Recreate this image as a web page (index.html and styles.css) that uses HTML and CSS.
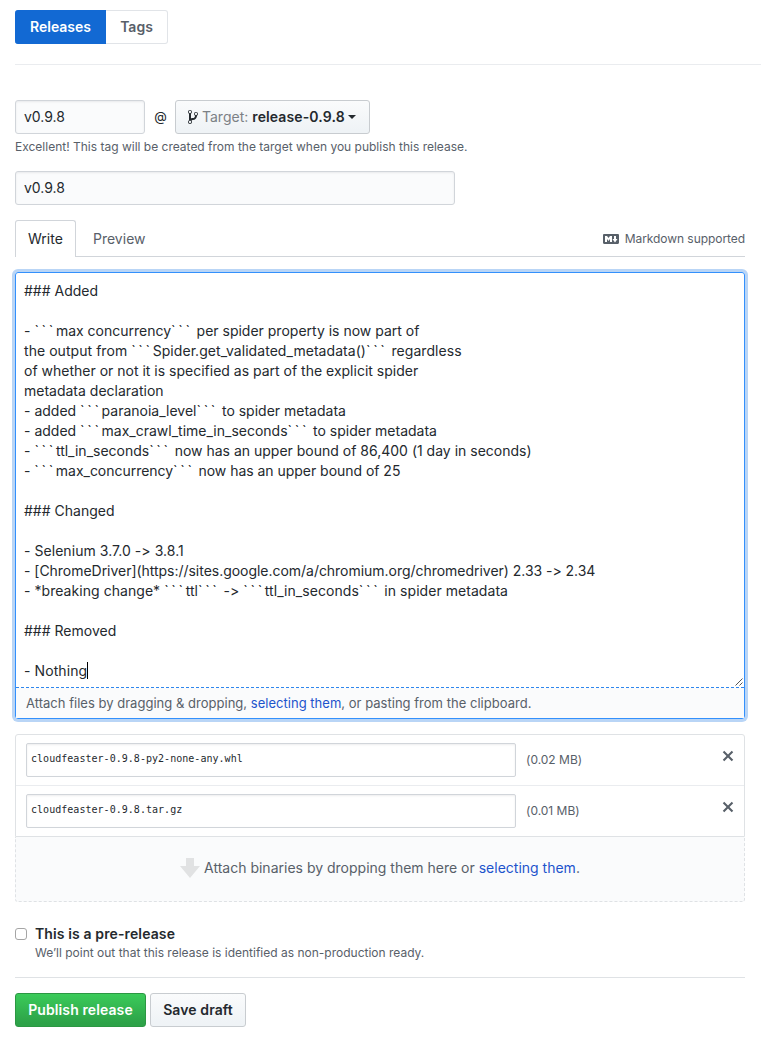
FILE: index.html
```
<!DOCTYPE html>
<html lang="en">
<head>
<meta charset="utf-8">
<title>New release</title>
<link rel="stylesheet" href="styles.css">
</head>
<body>
<nav class="subnav"><a class="seg selected"><span class="t-releases">Releases</span></a><a class="seg"><span class="t-tags">Tags</span></a></nav>
<main class="form">
  <div class="tag-row">
    <div class="field tag-field"><span>v0.9.8</span></div>
    <span class="at">@</span>
    <div class="btn target">
      <svg class="branch" width="10" height="16" viewBox="0 0 10 16"><path d="M10 5c0-1.11-.89-2-2-2a1.993 1.993 0 0 0-1 3.72v.3c-.02.52-.23.98-.63 1.38-.4.4-.86.61-1.38.63-.83.02-1.48.16-2 .45V4.72a1.993 1.993 0 0 0-1-3.72C.88 1 0 1.89 0 3a2 2 0 0 0 1 1.72v6.56c-.59.35-1 .99-1 1.72 0 1.11.89 2 2 2 1.11 0 2-.89 2-2 0-.53-.2-1-.53-1.36.09-.06.48-.41.59-.47.25-.11.56-.17.94-.17 1.05-.05 1.95-.45 2.75-1.25S8.95 7.77 9 6.73h-.02C9.59 6.37 10 5.73 10 5zM2 1.8c.66 0 1.2.55 1.2 1.2 0 .65-.55 1.2-1.2 1.2C1.35 4.2.8 3.65.8 3c0-.65.55-1.2 1.2-1.2zm0 12.41c-.66 0-1.2-.55-1.2-1.2 0-.65.55-1.2 1.2-1.2.65 0 1.2.55 1.2 1.2 0 .65-.55 1.2-1.2 1.2zm6-8c-.66 0-1.2-.55-1.2-1.2 0-.65.55-1.2 1.2-1.2.65 0 1.2.55 1.2 1.2 0 .65-.55 1.2-1.2 1.2z"/></svg>
      <span class="muted">Target:</span><b class="t-branch">release-0.9.8</b><i class="caret"></i>
    </div>
  </div>
  <p class="hint"><span>Excellent! This tag will be created from the target when you publish this release.</span></p>
  <div class="field title-field"><span>v0.9.8</span></div>
  <div class="tabs">
    <a class="tab active"><span>Write</span></a><a class="tab"><span>Preview</span></a>
    <span class="md"><svg width="16" height="16" viewBox="0 0 16 16"><path fill-rule="evenodd" d="M14.85 3H1.15C.52 3 0 3.52 0 4.15v7.69C0 12.48.52 13 1.15 13h13.69c.64 0 1.15-.52 1.15-1.15v-7.7C16 3.52 15.48 3 14.85 3zM9 11H7V8L5.5 9.92 4 8v3H2V5h2l1.5 2L7 5h2v6zm2.99.5L9.5 8H11V5h2v3h1.5l-2.51 3.5z"/></svg><span class="t-md">Markdown supported</span></span>
  </div>
  <div class="editor">
    <div class="text">
      <div><span>### Added</span></div>
      <div></div>
      <div><span>- <q>```</q>max concurrency<q>```</q> per spider property is now part of</span></div>
      <div><span class="wide">the output from <q>```</q>Spider.get_validated_metadata()<q>```</q> regardless</span></div>
      <div><span>of whether or not it is specified as part of the explicit spider</span></div>
      <div><span>metadata declaration</span></div>
      <div><span>- added <q>```</q>paranoia_level<q>```</q> to spider metadata</span></div>
      <div><span>- added <q>```</q>max_crawl_time_in_seconds<q>```</q> to spider metadata</span></div>
      <div><span>- <q>```</q>ttl_in_seconds<q>```</q> now has an upper bound of 86,400 (1 day in seconds)</span></div>
      <div><span class="tight">- <q>```</q>max_concurrency<q>```</q> now has an upper bound of 25</span></div>
      <div></div>
      <div><span>### Changed</span></div>
      <div></div>
      <div><span class="wide">- Selenium 3.7.0 -&gt; 3.8.1</span></div>
      <div><span class="tight">- [ChromeDriver](https://sites.google.com/a/chromium.org/chromedriver) 2.33 -&gt; 2.34</span></div>
      <div><span class="wide">- *breaking change* <q>```</q>ttl<q>```</q> -&gt; <q>```</q>ttl_in_seconds<q>```</q> in spider metadata</span></div>
      <div></div>
      <div><span>### Removed</span></div>
      <div></div>
      <div class="last"><span>- Nothing</span><i class="cursor"></i></div>
      <svg class="grip" width="8" height="8" viewBox="0 0 8 8"><path d="M.5 7.5l7-7M4.5 7.5l3-3"/></svg>
    </div>
    <div class="attach"><span>Attach files by dragging &amp; dropping, <a>selecting them</a>, or pasting from the clipboard.</span></div>
  </div>
  <div class="files">
    <div class="file"><div class="filename">cloudfeaster-0.9.8-py2-none-any.whl</div><span class="size">(0.02 MB)</span><svg class="x" width="12" height="16" viewBox="0 0 12 16"><path d="M7.48 8l3.75 3.75-1.48 1.48L6 9.48l-3.75 3.75-1.48-1.48L4.52 8 .77 4.25l1.48-1.48L6 6.52l3.75-3.75 1.48 1.48z"/></svg></div>
    <div class="file"><div class="filename">cloudfeaster-0.9.8.tar.gz</div><span class="size">(0.01 MB)</span><svg class="x" width="12" height="16" viewBox="0 0 12 16"><path d="M7.48 8l3.75 3.75-1.48 1.48L6 9.48l-3.75 3.75-1.48-1.48L4.52 8 .77 4.25l1.48-1.48L6 6.52l3.75-3.75 1.48 1.48z"/></svg></div>
  </div>
  <div class="drop"><svg width="20" height="20" viewBox="0 0 20 20"><path d="M6 0h8v8h6L10 20 0 8h6z"/></svg><span class="t-drop">Attach binaries by dropping them here or <a>selecting them</a>.</span></div>
  <div class="pre">
    <i class="box"></i>
    <div><div class="pre-title"><span>This is a pre-release</span></div><div class="pre-note"><span>We’ll point out that this release is identified as non-production ready.</span></div></div>
  </div>
  <div class="actions"><div class="btn publish"><span>Publish release</span></div><div class="btn save"><span>Save draft</span></div></div>
</main>
</body>
</html>
```
FILE: styles.css
```
* { box-sizing: border-box; }
body {
  margin: 0;
  padding: 10px 0 0 15px;
  background: #fff;
  color: #24292e;
  font: 14px/20px Inter, "Liberation Sans", sans-serif;
  font-feature-settings: "calt" 0;
  overflow: hidden;
}
a { color: #1d54cc; }
svg { display: block; flex: none; fill: currentColor; }
span, b { white-space: nowrap; }
.subnav { display: flex; height: 55px; border-bottom: 1px solid #eaecef; }
.seg {
  height: 34px; width: 62px;
  display: flex; align-items: center; justify-content: center;
  border: 1px solid #e1e4e8; border-left: 0; border-radius: 0 3px 3px 0;
  color: #586069; font-weight: 600;
}
.seg.selected { width: 91px; background: #1269d3; border-color: #1269d3; color: #fff; border-radius: 3px 0 0 3px; }
.t-releases { padding-left: 1px; }
.form { width: 730px; padding-top: 35px; }
.tag-row { display: flex; align-items: center; }
.field {
  height: 34px; padding: 0 8px; display: flex; align-items: center;
  border: 1px solid #d1d5da; border-radius: 3px; background: #fafbfc;
  box-shadow: inset 0 1px 2px rgba(27,31,35,.075);
}
.tag-field { width: 130px; }
.title-field { width: 440px; margin-top: 14px; }
.at { width: 30px; text-align: center; font-size: 13px; padding: 0 0 2px 1px; }
.btn {
  height: 34px; display: flex; align-items: center; justify-content: center;
  border: 1px solid #c8ccd0; border-radius: 3px; font-weight: 600;
  background: linear-gradient(#fafbfc, #eff3f6 90%);
}
.target { width: 195px; justify-content: flex-start; padding-left: 12px; }
.branch { margin-right: 4px; }
.muted { font-weight: 400; color: #7c8186; margin-right: 4px; }
.t-branch { font-weight: 600; letter-spacing: .12px; }
.caret { border: 4px solid transparent; border-top-color: #24292e; border-bottom: 0; margin-left: auto; margin-right: 13px; }
.hint { margin: 4px 0 0; height: 19px; line-height: 18px; font-size: 12px; color: #586069; }
.tabs { display: flex; align-items: flex-start; height: 37px; margin-top: 15px; border-bottom: 1px solid #d1d5da; color: #586069; }
.tab { height: 37px; line-height: 37px; color: #586069; padding: 0 17px; }
.tab.active { width: 61px; padding: 0 12px; color: #24292e; background: #fff; border: 1px solid #d1d5da; border-bottom: 0; border-radius: 3px 3px 0 0; line-height: 36px; }
.md { margin-left: auto; display: flex; align-items: center; gap: 6px; height: 37px; font-size: 12px; }
.t-md { letter-spacing: -.06px; }
.editor { margin-top: 15px; height: 447px; border: 1px solid #3390fc; border-radius: 3px; box-shadow: 0 0 0 3px #b9d5f6; }
.text { position: relative; height: 415px; padding: 8px; border-bottom: 1px dashed #2f87ee; }
.text div { height: 20px; }
.text q { quotes: none; letter-spacing: 2.65px; }
.text .wide { letter-spacing: .05px; }
.text .tight { letter-spacing: -.03px; }
.text .last { display: flex; letter-spacing: .08px; }
.cursor { width: 1px; height: 17px; margin-top: 1px; background: #000; }
.grip { position: absolute; right: 1px; bottom: 1px; fill: none; stroke: #555; stroke-width: 1; }
.attach { height: 30px; padding: 0 10px; line-height: 30px; background: #fafbfc; color: #586069; font-size: 13px; letter-spacing: .02px; }
.files { margin-top: 15px; height: 103px; border: 1px solid #dfe2e5; border-radius: 3px 3px 0 0; }
.file { height: 50px; padding: 8px 10px; display: flex; }
.file + .file { height: 51px; border-top: 1px solid #eaecef; }
.filename {
  width: 490px; height: 34px; padding-left: 4px; border: 1px solid #d1d5da; border-radius: 2px;
  box-shadow: inset 0 1px 2px rgba(27,31,35,.075);
  font: 10px/29px "DejaVu Sans Mono", monospace; letter-spacing: .03px; white-space: nowrap;
}
.size { margin-left: 10px; font-size: 12px; line-height: 34px; color: #586069; }
.x { margin: 5px 0 0 auto; color: #586069; }
.drop { height: 65px; padding-bottom: 2px; display: flex; align-items: center; justify-content: center; background: #fafbfc; border: 1px dashed #dfe2e5; border-top: 0; border-radius: 0 0 3px 3px; color: #586069; gap: 4px; }
.drop svg { color: #e1e2e3; }
.pre { display: flex; height: 76px; padding-top: 22px; border-bottom: 1px solid #dfe2e5; }
.box { width: 12px; height: 12px; margin: 4px 8px 0 0; border: 1px solid #a5a5a5; border-radius: 3px; background: #fff; }
.pre-title { font-weight: 600; letter-spacing: .12px; }
.pre-note { font-size: 12px; line-height: 18px; color: #586069; }
.actions { display: flex; gap: 4px; margin-top: 15px; }
.publish { width: 131px; letter-spacing: .1px; color: #fff; border-color: #2c9743; background: linear-gradient(#3bcb5a, #2da248 90%); }
.save { width: 96px; letter-spacing: .1px; }
```
